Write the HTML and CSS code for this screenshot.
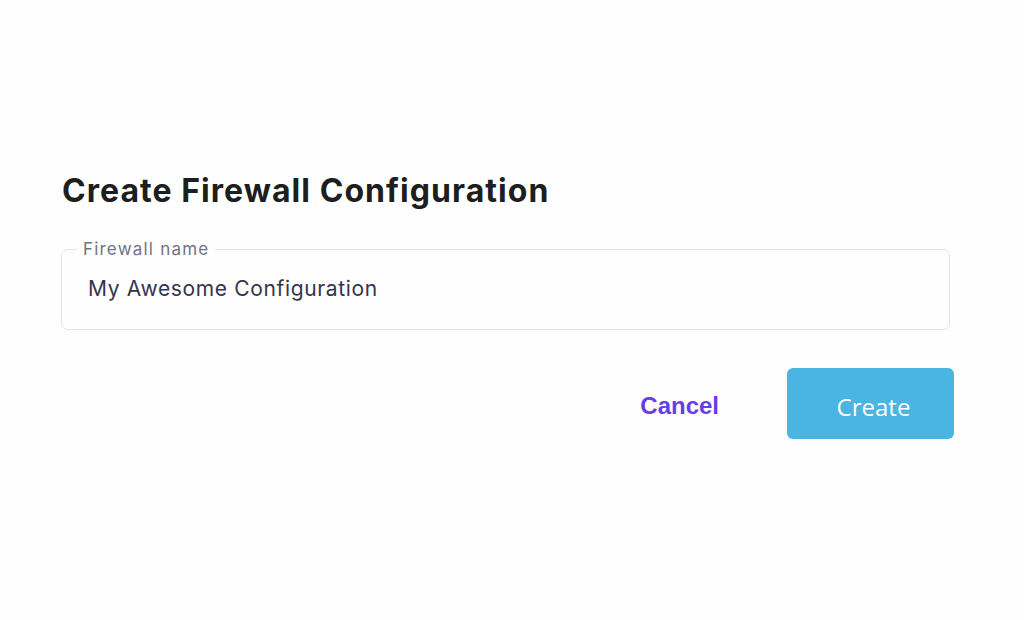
FILE: index.html
```html
<!DOCTYPE html>
<html>
<head>
<meta charset="utf-8">
<link rel="stylesheet" href="styles.css">
</head>
<body>
<main class="dialog">
  <h1 class="title">Create Firewall Configuration</h1>
  <fieldset class="field">
    <legend class="field-label">Firewall name</legend>
    <div class="field-value">My Awesome Configuration</div>
  </fieldset>
  <div class="actions">
    <button class="btn-cancel">Cancel</button>
    <button class="btn-create">Create</button>
  </div>
</main>
</body>
</html>
```

FILE: styles.css
```css
html, body {
  margin: 0;
  padding: 0;
  background: #fefefe;
  width: 1024px;
  height: 620px;
  overflow: hidden;
}
.dialog {
  padding: 171px 70px 0 61px;
  font-family: Inter, "Noto Sans", sans-serif;
}
.title {
  margin: 0 0 0 1px;
  font-size: 32px;
  line-height: 40px;
  font-weight: 700;
  color: #1d1e20;
  letter-spacing: 1.05px;
}
.field {
  margin: 28px 0 0 0;
  width: 889px;
  box-sizing: border-box;
  height: 91px;
  border: 1.5px solid #e3e3e8;
  border-radius: 7px;
  padding: 0 0 0 26px;
}
.field-label {
  margin-left: -11px;
  padding: 0 6px 0 6px;
  font-size: 17px;
  line-height: 20px;
  color: #717384;
  letter-spacing: 1.2px;
}
.field-value {
  margin-top: 17px;
  font-size: 21px;
  line-height: 26px;
  color: #36344d;
  letter-spacing: 0.65px;
}
.actions {
  margin-top: 38px;
  display: flex;
  justify-content: flex-end;
  align-items: center;
  gap: 68px;
  width: 893px;
}
.btn-cancel {
  border: none;
  background: none;
  padding: 0;
  font-family: "Liberation Sans", Arial, sans-serif;
  font-weight: 700;
  font-size: 24px;
  color: #673de6;
  margin-top: 4px;
}
.btn-create {
  border: none;
  width: 167px;
  height: 71px;
  border-radius: 6px;
  background: #4ab5e3;
  color: #ffffff;
  font-family: "Open Sans", sans-serif;
  font-size: 24px;
  padding: 5px 0 0 6px;
}
```
